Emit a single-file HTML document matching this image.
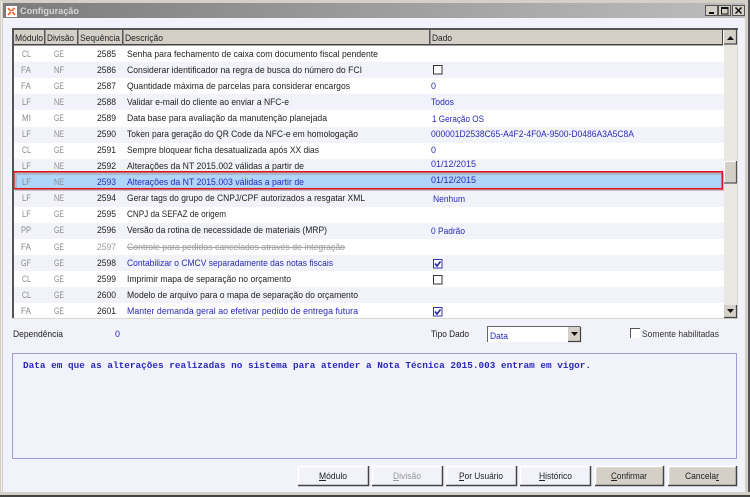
<!DOCTYPE html>
<html><head><meta charset="utf-8"><style>
html,body{margin:0;padding:0;width:750px;height:497px;overflow:hidden;background:#f2f3fa}
svg{display:block;filter:blur(.3px)}
text{font-family:"Liberation Sans",sans-serif;font-size:9.5px;fill:#222;white-space:pre}
.g{fill:#8c8c8c}.b{fill:#2a2ab8}.l{fill:#999}
.mono{font-family:"Liberation Mono",monospace;font-weight:bold;fill:#2a2ab8}
</style></head><body>
<svg width="750" height="497" viewBox="0 0 750 497" xmlns="http://www.w3.org/2000/svg" lengthAdjust="spacingAndGlyphs">
<defs>
<linearGradient id="tb" x1="0" x2="1" y1="0" y2="0"><stop offset="0" stop-color="#7c7c7c"/><stop offset="1" stop-color="#bdbdbd"/></linearGradient>
<pattern id="tr" width="2" height="2" patternUnits="userSpaceOnUse"><rect width="2" height="2" fill="#eeeee9"/><rect width="1" height="1" fill="#e4e3dc"/><rect x="1" y="1" width="1" height="1" fill="#e4e3dc"/></pattern>
</defs>
<!-- window -->
<rect width="750" height="497" fill="#f2f3fa"/>
<rect x="0" y="0" width="750" height="3" fill="#d4d0c8"/>
<rect x="0" y="0" width="3" height="497" fill="#d4d0c8"/>
<rect x="1" y="1" width="1" height="495" fill="#efeee9"/>
<rect x="745" y="0" width="3" height="497" fill="#d4d0c8"/>
<rect x="748" y="0" width="2" height="497" fill="#555"/>
<rect x="0" y="492" width="750" height="3" fill="#d4d0c8"/>
<rect x="0" y="495" width="750" height="2" fill="#444"/>
<rect x="3" y="3" width="742" height="15" fill="url(#tb)"/>
<!-- icon -->
<rect x="6" y="6" width="11" height="11" fill="#fff"/>
<path d="M8 8l2.5 3M14.500 8l-3 3M8 15l3-3M15 15l-2.500-3" stroke="#e8622a" stroke-width="1.700" fill="none"/>
<text x="20" y="14" textLength="59" lengthAdjust="spacingAndGlyphs" font-weight="bold" style="fill:#d6d6d6;font-weight:bold">Configuração</text>
<!-- window buttons -->
<g fill="#d4d0c8" stroke="#555" stroke-width="1">
<rect x="705.500" y="5.500" width="12" height="10"/><rect x="718.500" y="5.500" width="12" height="10"/><rect x="732.500" y="5.500" width="12" height="10"/>
</g>
<rect x="709" y="12" width="5" height="2" fill="#111"/>
<rect x="721.500" y="7.500" width="6.500" height="6.500" fill="none" stroke="#111"/><rect x="721" y="7" width="7" height="2" fill="#111"/>
<path d="M735.500 7.500l6 6M741.500 7.500l-6 6" stroke="#111" stroke-width="1.500"/>

<!-- table frame -->
<rect x="12" y="28" width="726" height="291" fill="#fff"/>
<rect x="12" y="28" width="2" height="291" fill="#555"/>
<rect x="12" y="318" width="726" height="1" fill="#d8d8d4"/>
<rect x="737" y="28" width="1" height="291" fill="#d8d8d4"/>
<rect x="12" y="28" width="726" height="2" fill="#555"/>

<!-- bands -->
<g fill="#f2f3fa">
<rect x="14" y="62" width="710" height="16"/><rect x="14" y="94" width="710" height="16"/>
<rect x="14" y="127" width="710" height="16"/><rect x="14" y="159" width="710" height="14"/>
<rect x="14" y="189" width="710" height="18"/><rect x="14" y="223" width="710" height="16"/>
<rect x="14" y="255" width="710" height="16"/><rect x="14" y="287" width="710" height="16"/>
</g>

<!-- header -->
<rect x="14" y="30" width="709" height="15" fill="#d4d0c8"/>
<rect x="14" y="44" width="709" height="1.500" fill="#444"/>
<rect x="722" y="29" width="1" height="16" fill="#444"/>
<g fill="#555">
<rect x="44" y="30" width="1.500" height="15"/><rect x="77" y="30" width="1.500" height="15"/><rect x="122" y="30" width="1.500" height="15"/><rect x="429" y="30" width="1.500" height="15"/>
</g>
<text x="15" y="41" textLength="28" lengthAdjust="spacingAndGlyphs">Módulo</text>
<text x="47" y="41" textLength="27" lengthAdjust="spacingAndGlyphs">Divisão</text>
<text x="80" y="41" textLength="40" lengthAdjust="spacingAndGlyphs">Sequência</text>
<text x="125" y="41" textLength="38" lengthAdjust="spacingAndGlyphs">Descrição</text>
<text x="432" y="41" textLength="20" lengthAdjust="spacingAndGlyphs">Dado</text>

<!-- selected -->
<rect x="14" y="172" width="708" height="16" fill="#b0d5fb"/>
<rect x="14" y="172" width="708" height="3" fill="#a9b9c9"/>
<rect x="14" y="172" width="3" height="16" fill="#a9b9c9"/>
<rect x="15" y="189" width="710" height="2" fill="#a8a8b4" opacity=".7"/>
<rect x="722.500" y="173" width="2" height="17" fill="#a8a8b4" opacity=".7"/>
<rect x="13.750" y="171.750" width="708.500" height="17" fill="none" stroke="#e01018" stroke-width="1.500"/>

<!-- module / division -->
<g class="g" lengthAdjust="spacingAndGlyphs">
<text class="g" x="22" y="57" textLength="9" lengthAdjust="spacingAndGlyphs">CL</text><text class="g" x="54" y="57" textLength="10" lengthAdjust="spacingAndGlyphs">GE</text>
<text class="g" x="21" y="73" textLength="10" lengthAdjust="spacingAndGlyphs">FA</text><text class="g" x="54" y="73" textLength="10" lengthAdjust="spacingAndGlyphs">NF</text>
<text class="g" x="21" y="89" textLength="10" lengthAdjust="spacingAndGlyphs">FA</text><text class="g" x="54" y="89" textLength="10" lengthAdjust="spacingAndGlyphs">GE</text>
<text class="g" x="22" y="105" textLength="9" lengthAdjust="spacingAndGlyphs">LF</text><text class="g" x="54" y="105" textLength="10" lengthAdjust="spacingAndGlyphs">NE</text>
<text class="g" x="22" y="121" textLength="9" lengthAdjust="spacingAndGlyphs">MI</text><text class="g" x="54" y="121" textLength="10" lengthAdjust="spacingAndGlyphs">GE</text>
<text class="g" x="22" y="137" textLength="9" lengthAdjust="spacingAndGlyphs">LF</text><text class="g" x="54" y="137" textLength="10" lengthAdjust="spacingAndGlyphs">NE</text>
<text class="g" x="22" y="153" textLength="9" lengthAdjust="spacingAndGlyphs">CL</text><text class="g" x="54" y="153" textLength="10" lengthAdjust="spacingAndGlyphs">GE</text>
<text class="g" x="22" y="169" textLength="9" lengthAdjust="spacingAndGlyphs">LF</text><text class="g" x="54" y="169" textLength="10" lengthAdjust="spacingAndGlyphs">NE</text>
<text class="g" x="22" y="185" textLength="9" lengthAdjust="spacingAndGlyphs">LF</text><text class="g" x="54" y="185" textLength="10" lengthAdjust="spacingAndGlyphs">NE</text>
<text class="g" x="22" y="201" textLength="9" lengthAdjust="spacingAndGlyphs">LF</text><text class="g" x="54" y="201" textLength="10" lengthAdjust="spacingAndGlyphs">NE</text>
<text class="g" x="22" y="217" textLength="9" lengthAdjust="spacingAndGlyphs">LF</text><text class="g" x="54" y="217" textLength="10" lengthAdjust="spacingAndGlyphs">GE</text>
<text class="g" x="21" y="233" textLength="10" lengthAdjust="spacingAndGlyphs">PP</text><text class="g" x="54" y="233" textLength="10" lengthAdjust="spacingAndGlyphs">GE</text>
<text class="g" x="21" y="250" textLength="10" lengthAdjust="spacingAndGlyphs">FA</text><text class="g" x="54" y="250" textLength="10" lengthAdjust="spacingAndGlyphs">GE</text>
<text class="g" x="21" y="266" textLength="10" lengthAdjust="spacingAndGlyphs">GF</text><text class="g" x="54" y="266" textLength="10" lengthAdjust="spacingAndGlyphs">GE</text>
<text class="g" x="22" y="282" textLength="9" lengthAdjust="spacingAndGlyphs">CL</text><text class="g" x="54" y="282" textLength="10" lengthAdjust="spacingAndGlyphs">GE</text>
<text class="g" x="22" y="298" textLength="9" lengthAdjust="spacingAndGlyphs">CL</text><text class="g" x="54" y="298" textLength="10" lengthAdjust="spacingAndGlyphs">GE</text>
<text class="g" x="21" y="314" textLength="10" lengthAdjust="spacingAndGlyphs">FA</text><text class="g" x="54" y="314" textLength="10" lengthAdjust="spacingAndGlyphs">GE</text>
</g>

<!-- sequence -->
<text x="97" y="57" textLength="19" lengthAdjust="spacingAndGlyphs">2585</text>
<text x="97" y="73" textLength="19" lengthAdjust="spacingAndGlyphs">2586</text>
<text x="97" y="89" textLength="19" lengthAdjust="spacingAndGlyphs">2587</text>
<text x="97" y="105" textLength="19" lengthAdjust="spacingAndGlyphs">2588</text>
<text x="97" y="121" textLength="19" lengthAdjust="spacingAndGlyphs">2589</text>
<text x="97" y="137" textLength="19" lengthAdjust="spacingAndGlyphs">2590</text>
<text x="97" y="153" textLength="19" lengthAdjust="spacingAndGlyphs">2591</text>
<text x="97" y="169" textLength="19" lengthAdjust="spacingAndGlyphs">2592</text>
<text class="b" x="97" y="185" textLength="19" lengthAdjust="spacingAndGlyphs">2593</text>
<text x="97" y="201" textLength="19" lengthAdjust="spacingAndGlyphs">2594</text>
<text x="97" y="217" textLength="19" lengthAdjust="spacingAndGlyphs">2595</text>
<text x="97" y="233" textLength="19" lengthAdjust="spacingAndGlyphs">2596</text>
<text class="l" x="97" y="250" textLength="19" lengthAdjust="spacingAndGlyphs">2597</text>
<text x="97" y="266" textLength="19" lengthAdjust="spacingAndGlyphs">2598</text>
<text x="97" y="282" textLength="19" lengthAdjust="spacingAndGlyphs">2599</text>
<text x="97" y="298" textLength="19" lengthAdjust="spacingAndGlyphs">2600</text>
<text x="97" y="314" textLength="19" lengthAdjust="spacingAndGlyphs">2601</text>

<!-- description -->
<text x="127" y="57" textLength="251" lengthAdjust="spacingAndGlyphs">Senha para fechamento de caixa com documento fiscal pendente</text>
<text x="127" y="73" textLength="235" lengthAdjust="spacingAndGlyphs">Considerar identificador na regra de busca do número do FCI</text>
<text x="127" y="89" textLength="223" lengthAdjust="spacingAndGlyphs">Quantidade máxima de parcelas para considerar encargos</text>
<text x="127" y="105" textLength="162" lengthAdjust="spacingAndGlyphs">Validar e-mail do cliente ao enviar a NFC-e</text>
<text x="127" y="121" textLength="200" lengthAdjust="spacingAndGlyphs">Data base para avaliação da manutenção planejada</text>
<text x="127" y="137" textLength="231" lengthAdjust="spacingAndGlyphs">Token para geração do QR Code da NFC-e em homologação</text>
<text x="127" y="153" textLength="192" lengthAdjust="spacingAndGlyphs">Sempre bloquear ficha desatualizada após XX dias</text>
<text x="127" y="169" textLength="177" lengthAdjust="spacingAndGlyphs">Alterações da NT 2015.002 válidas a partir de</text>
<text class="b" x="127" y="185" textLength="177" lengthAdjust="spacingAndGlyphs">Alterações da NT 2015.003 válidas a partir de</text>
<text x="127" y="201" textLength="238" lengthAdjust="spacingAndGlyphs">Gerar tags do grupo de CNPJ/CPF autorizados a resgatar XML</text>
<text x="127" y="217" textLength="99" lengthAdjust="spacingAndGlyphs">CNPJ da SEFAZ de origem</text>
<text x="127" y="233" textLength="200" lengthAdjust="spacingAndGlyphs">Versão da rotina de necessidade de materiais (MRP)</text>
<text class="l" x="127" y="250" textLength="218" lengthAdjust="spacingAndGlyphs" text-decoration="line-through">Controle para pedidos cancelados através de integração</text>
<text class="b" x="127" y="266" textLength="206" lengthAdjust="spacingAndGlyphs">Contabilizar o CMCV separadamente das notas fiscais</text>
<text x="127" y="282" textLength="164" lengthAdjust="spacingAndGlyphs">Imprimir mapa de separação no orçamento</text>
<text x="127" y="298" textLength="231" lengthAdjust="spacingAndGlyphs">Modelo de arquivo para o mapa de separação do orçamento</text>
<text class="b" x="127" y="314" textLength="231" lengthAdjust="spacingAndGlyphs">Manter demanda geral ao efetivar pedido de entrega futura</text>

<!-- values -->
<text class="b" x="431" y="89" textLength="5" lengthAdjust="spacingAndGlyphs">0</text>
<text class="b" x="431" y="105" textLength="23" lengthAdjust="spacingAndGlyphs">Todos</text>
<text class="b" x="432" y="122" textLength="52" lengthAdjust="spacingAndGlyphs">1 Geração OS</text>
<text class="b" x="431" y="137" textLength="203" lengthAdjust="spacingAndGlyphs">000001D2538C65-A4F2-4F0A-9500-D0486A3A5C8A</text>
<text class="b" x="431" y="153" textLength="5" lengthAdjust="spacingAndGlyphs">0</text>
<text class="b" x="431" y="167" textLength="45" lengthAdjust="spacingAndGlyphs">01/12/2015</text>
<text class="b" x="431" y="183" textLength="45" lengthAdjust="spacingAndGlyphs">01/12/2015</text>
<text class="b" x="433" y="202" textLength="32" lengthAdjust="spacingAndGlyphs">Nenhum</text>
<text class="b" x="431" y="234" textLength="34" lengthAdjust="spacingAndGlyphs">0 Padrão</text>

<!-- checkboxes -->
<rect x="433.500" y="65.500" width="8.500" height="8.500" fill="#fff" stroke="#333"/>
<rect x="433.500" y="275.500" width="8.500" height="8.500" fill="#fff" stroke="#333"/>
<rect x="433.500" y="259.500" width="8.500" height="8.500" fill="#fff" stroke="#3333aa"/>
<path d="M435 263.500l2 2.500 3.500-4.500" fill="none" stroke="#222288" stroke-width="1.500"/>
<rect x="433.500" y="307.500" width="8.500" height="8.500" fill="#fff" stroke="#3333aa"/>
<path d="M435 311.500l2 2.500 3.500-4.500" fill="none" stroke="#222288" stroke-width="1.500"/>

<!-- scrollbar -->
<rect x="724" y="30" width="13" height="288" fill="url(#tr)"/>
<rect x="724" y="30" width="13" height="14" fill="#d4d0c8"/>
<path d="M736.500 30v14h-12.500" fill="none" stroke="#444" stroke-width="1.200"/>
<path d="M727 40h7l-3.500-4z" fill="#111"/>
<rect x="724" y="305" width="13" height="13" fill="#d4d0c8"/>
<path d="M736.500 305v12.500h-12.500" fill="none" stroke="#444" stroke-width="1.200"/>
<path d="M727 309h7l-3.500 4z" fill="#111"/>
<rect x="724" y="161" width="13" height="22" fill="#d4d0c8"/>
<path d="M724.500 183v-21.500h12" fill="none" stroke="#fff"/>
<path d="M736.500 161v22h-12.500" fill="none" stroke="#555" stroke-width="1.200"/>

<!-- lower controls -->
<text x="13" y="337" textLength="50" lengthAdjust="spacingAndGlyphs">Dependência</text>
<text class="b" x="115" y="337" textLength="5" lengthAdjust="spacingAndGlyphs">0</text>
<text x="431" y="337" textLength="38" lengthAdjust="spacingAndGlyphs">Tipo Dado</text>
<rect x="487" y="326" width="94" height="16" fill="#fff"/>
<path d="M487.500 342v-15.500h93" fill="none" stroke="#666"/>
<text class="b" x="490" y="339" textLength="18" lengthAdjust="spacingAndGlyphs">Data</text>
<rect x="568" y="327" width="12" height="14" fill="#d4d0c8"/>
<path d="M580.500 327v14.500h-12.500" fill="none" stroke="#444" stroke-width="1.200"/>
<path d="M571 332h7l-3.500 4z" fill="#111"/>
<rect x="630" y="328" width="10" height="10" fill="#fff"/>
<path d="M630.500 338v-9.500h9.500" fill="none" stroke="#555"/>
<text x="642" y="337" textLength="77" lengthAdjust="spacingAndGlyphs" style="fill:#333">Somente habilitadas</text>

<!-- memo -->
<rect x="12.500" y="353.500" width="724" height="105" fill="#f2f3fa" stroke="#9c9cdc"/>
<text class="mono" x="23" y="368" textLength="568" lengthAdjust="spacingAndGlyphs">Data em que as alterações realizadas no sistema para atender a Nota Técnica 2015.003 entram em vigor.</text>

<!-- buttons -->
<g stroke-width="1.500" fill="none">
<rect x="298" y="466" width="71" height="20" fill="#f2f3fa" stroke="none"/><path d="M298 466.500h70M298.500 466v19" stroke="#fff"/><path d="M368.500 466v19.500h-70.500" stroke="#444"/>
<rect x="372" y="466" width="71" height="20" fill="#f2f3fa" stroke="none"/><path d="M372 466.500h70M372.500 466v19" stroke="#fff"/><path d="M442.500 466v19.500h-70.500" stroke="#444"/>
<rect x="446" y="466" width="71" height="20" fill="#f2f3fa" stroke="none"/><path d="M446 466.500h70M446.500 466v19" stroke="#fff"/><path d="M516.500 466v19.500h-70.500" stroke="#444"/>
<rect x="520" y="466" width="71" height="20" fill="#f2f3fa" stroke="none"/><path d="M520 466.500h70M520.500 466v19" stroke="#fff"/><path d="M590.500 466v19.500h-70.500" stroke="#444"/>
<rect x="595" y="466" width="69" height="20" fill="#d4d0c8" stroke="none"/><path d="M595 466.500h68M595.500 466v19" stroke="#fff"/><path d="M663.500 466v19.500h-68.500" stroke="#444"/>
<rect x="668" y="466" width="69" height="20" fill="#d4d0c8" stroke="none"/><path d="M668 466.500h68M668.500 466v19" stroke="#fff"/><path d="M736.500 466v19.500h-68.500" stroke="#444"/>
</g>
<text x="319" y="479" textLength="28" lengthAdjust="spacingAndGlyphs">Módulo</text><rect x="319" y="480" width="7" height="1" fill="#222"/>
<text class="l" x="393" y="479" textLength="28" lengthAdjust="spacingAndGlyphs">Divisão</text><rect x="393" y="480" width="6" height="1" fill="#999"/>
<text x="459" y="479" textLength="44" lengthAdjust="spacingAndGlyphs">Por Usuário</text><rect x="459" y="480" width="5" height="1" fill="#222"/>
<text x="539" y="479" textLength="33" lengthAdjust="spacingAndGlyphs">Histórico</text><rect x="539" y="480" width="6" height="1" fill="#222"/>
<text x="611" y="479" textLength="36" lengthAdjust="spacingAndGlyphs">Confirmar</text><rect x="611" y="480" width="6" height="1" fill="#222"/>
<text x="685" y="479" textLength="34" lengthAdjust="spacingAndGlyphs">Cancelar</text><rect x="716" y="480" width="3" height="1" fill="#222"/>
</svg>
</body></html>
